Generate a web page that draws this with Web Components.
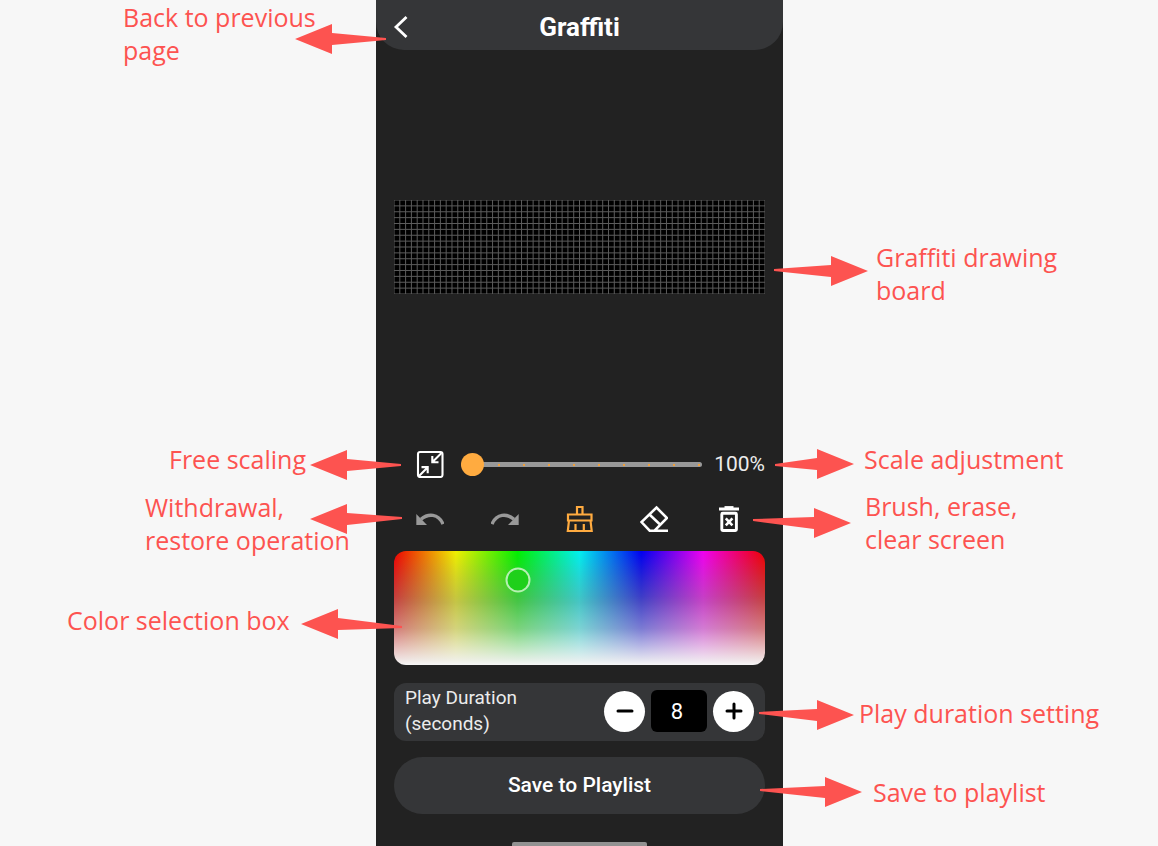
<!DOCTYPE html>
<html lang="en">
<head>
<meta charset="utf-8">
<meta name="viewport" content="width=device-width, initial-scale=1">
<title>Graffiti</title>
<style>
  html, body { margin: 0; min-height: 100%; background: #f7f7f7; }
</style>
</head>
<body>
<guide-page>
  <guide-callout slot="left" style="top:1px; right:-10px; width:263px; --arrow-top:22px"><span>Back to previous<br>page</span></guide-callout>
  <guide-callout slot="left" style="top:443px; right:-25px; width:232px; --arrow-top:6px"><span>Free scaling</span></guide-callout>
  <guide-callout slot="left" tilt="-1" length="92" style="top:491px; right:-26px; width:257px; --arrow-top:12px"><span>Withdrawal,<br>restore operation</span></guide-callout>
  <guide-callout slot="left" tilt="3" length="101" style="top:604px; right:-26px; width:335px; --arrow-top:4px"><span>Color selection box</span></guide-callout>

  <phone-screen slot="phone"></phone-screen>

  <guide-callout slot="right" side="right" tilt="-1" length="94" style="top:241px; left:-9px; --indent:102px; --arrow-top:14px"><span>Graffiti drawing<br>board</span></guide-callout>
  <guide-callout slot="right" side="right" tilt="1" length="79" style="top:443px; left:-8px; --indent:89px; --arrow-top:5px"><span>Scale adjustment</span></guide-callout>
  <guide-callout slot="right" side="right" tilt="-3" length="98" style="top:490px; left:-30px; --indent:112px; --arrow-top:17px"><span>Brush, erase,<br>clear screen</span></guide-callout>
  <guide-callout slot="right" side="right" tilt="-2" length="95" style="top:697px; left:-24px; --indent:100px; --arrow-top:2px"><span>Play duration setting</span></guide-callout>
  <guide-callout slot="right" side="right" tilt="-2" length="102" style="top:776px; left:-23px; --indent:113px; --arrow-top:0px"><span>Save to playlist</span></guide-callout>
</guide-page>

<script>
class BaseElement extends HTMLElement {
  render(html) {
    this.attachShadow({ mode: 'open' }).innerHTML = html;
  }
}

/* Three columns: notes, phone, notes. */
customElements.define('guide-page', class extends BaseElement {
  connectedCallback() {
    this.render(`
      <style>
        :host { display: grid; grid-template-columns: minmax(0, 376fr) minmax(0, 407fr) minmax(0, 375fr); min-height: 100vh; overflow: hidden; background: #f7f7f7; }
        aside { position: relative; z-index: 1; }
      </style>
      <aside><slot name="left"></slot></aside>
      <slot name="phone"></slot>
      <aside><slot name="right"></slot></aside>`);
  }
});

/* A red note whose arrow reaches over the edge of the phone. */
customElements.define('guide-callout', class extends BaseElement {
  connectedCallback() {
    const length = Number(this.getAttribute('length') || 91);
    const tilt = Number(this.getAttribute('tilt') || 0);
    const right = this.getAttribute('side') === 'right';
    const x = v => right ? length - v : v;
    const points = [[0, 16], [37, 1], [37, 10], [length, 15 + tilt], [length, 17 + tilt], [37, 22], [37, 31]]
      .map(([px, py]) => x(px) + ',' + py).join(' ');
    this.render(`
      <style>
        :host { position: absolute; display: grid; align-items: start; color: #fd5350; font: 25px/33px "Open Sans", "Noto Sans", sans-serif; font-variant-ligatures: none; white-space: nowrap; }
        .text, svg { grid-area: 1 / 1; }
        .text { margin-left: var(--indent, 0px); }
        svg { display: block; margin-top: var(--arrow-top, 0px); justify-self: ${right ? 'start' : 'end'}; }
      </style>
      <div class="text"><slot></slot></div>
      <svg width="${length}" height="32" viewBox="0 0 ${length} 32" aria-hidden="true"><polygon points="${points}" fill="#fd5350"/></svg>`);
  }
});

customElements.define('phone-screen', class extends BaseElement {
  connectedCallback() {
    this.render(`
      <style>
        :host { display: flex; flex-direction: column; background: #222; color: #fff; font-family: Roboto, sans-serif; }
        main { display: flex; flex-direction: column; padding: 150px 18px 0; }
        scale-row { margin-top: 156px; }
        tool-row { margin-top: 27px; }
        color-box { margin-top: 18px; }
        duration-card { margin-top: 18px; }
        .save { margin-top: 16px; height: 57px; padding: 0 0 2px; border: 0; border-radius: 29px; background: #353638; color: #fff; font: 500 21px/24px Roboto, sans-serif; }
        .home { width: 135px; height: 4px; margin: 28px auto 0; border-radius: 2px 2px 0 0; background: #929292; }
      </style>
      <app-header></app-header>
      <main>
        <drawing-board></drawing-board>
        <scale-row></scale-row>
        <tool-row></tool-row>
        <color-box></color-box>
        <duration-card></duration-card>
        <button class="save" type="button">Save to Playlist</button>
      </main>
      <div class="home"></div>`);
  }
});

customElements.define('app-header', class extends BaseElement {
  connectedCallback() {
    this.render(`
      <style>
        :host { display: grid; grid-template-columns: 48px 1fr 48px; align-items: center; height: 50px; border-radius: 0 0 28px 28px; background: #353638; }
        button { display: block; padding: 0; border: 0; background: none; }
        svg { display: block; margin: 4px 0 0 12px; }
        h1 { margin: 4px 0 0; text-align: center; font: 700 26px/30px Roboto, sans-serif; }
      </style>
      <button type="button" aria-label="Back"><svg width="24" height="28" viewBox="0 0 24 28" fill="none" stroke="#fff" stroke-width="2.8"><path d="M18.500 4 8 14l10.500 10"/></svg></button>
      <h1>Graffiti</h1>`);
  }
});

/* 64 x 16 LED matrix. */
customElements.define('drawing-board', class extends BaseElement {
  connectedCallback() {
    let d = '';
    for (let c = 0; c <= 64; c++) d += `M${c} 0V16`;
    for (let r = 0; r <= 16; r++) d += `M0 ${r}H64`;
    this.render(`
      <style>
        :host { display: block; height: 94px; background: #000; }
        svg { display: block; width: 100%; height: 100%; }
      </style>
      <svg viewBox="0 0 64 16" preserveAspectRatio="none" role="img" aria-label="Drawing board"><path d="${d}" fill="none" stroke="#5c5c5c" stroke-width="1" vector-effect="non-scaling-stroke"/></svg>`);
  }
});

customElements.define('scale-row', class extends BaseElement {
  connectedCallback() {
    this.render(`
      <style>
        :host { display: flex; align-items: center; height: 28px; padding-left: 22px; }
        button { padding: 0; border: 0; background: none; }
        svg { display: block; }
        input { appearance: none; flex: 1; min-width: 0; height: 22px; margin: 0 12px 0 17px; background: none; }
        input::-webkit-slider-runnable-track {
          height: 5px; border-radius: 3px;
          background: linear-gradient(90deg, #f0a03c 2px, transparent 2px) 12px 2px / 25px 2px repeat-x, #999;
        }
        input::-webkit-slider-thumb { appearance: none; width: 23px; height: 23px; margin-top: -9px; border-radius: 50%; background: #ffab40; }
        output { font-size: 21px; line-height: 24px; color: #ececec; }
      </style>
      <button type="button" aria-label="Free scaling">
        <svg width="28" height="28" viewBox="0 0 28 28" fill="none" stroke="#fff" stroke-width="2.1"><rect x="2" y="2" width="24.500" height="25" rx="2"/><path d="M25.500 3 16.500 12M16.300 6v6.200h6.200M2.500 26.500l9-9M5.500 17.100h6.200v6.200"/></svg>
      </button>
      <input id="scale" type="range" min="100" max="1000" value="100" aria-label="Scale">
      <output for="scale">100%</output>`);
  }
});

customElements.define('tool-row', class extends BaseElement {
  connectedCallback() {
    const tools = [
      ['Undo', '#999', '<path d="M.3 9v11H11z" fill="currentColor" stroke="none"/><path d="M5 14.300C12 8.300 22.500 8.300 27 19.200" stroke-width="3.400"/>'],
      ['Redo', '#999', '<path d="M27.700 9v11H17z" fill="currentColor" stroke="none"/><path d="M23 14.300C16 8.300 5.500 8.300 1 19.200" stroke-width="3.400"/>'],
      ['Brush', '#ffab40', '<path d="M11 9V2h5.500v7M2 9.500h23.500v6H2zM3 15.500 1.800 26h23.900L24.500 15.500M9.500 19v7M17.800 19v7" stroke-width="2.200"/>'],
      ['Erase', '#fff', '<path d="M16.500 2.500 27 13 14.500 25.700H9.700L1.500 17zM9.500 9.500l10.500 10M14 25.700h14" stroke-width="2.500"/>'],
      ['Clear screen', '#fff', '<path d="M4 4h20" stroke-width="3"/><path d="M9.500 2.300h9" stroke-width="2.400"/><rect x="6.800" y="8.300" width="14.600" height="17.200" rx="1" stroke-width="2.900"/><path d="m10.800 13.300 6.600 7M17.400 13.300l-6.600 7" stroke-width="2.600"/>']
    ];
    this.render(`
      <style>
        :host { display: flex; justify-content: space-between; padding: 0 22px; }
        button { padding: 0; border: 0; background: none; }
        svg { display: block; }
      </style>` + tools.map(([name, color, art]) =>
        `<button type="button" aria-label="${name}" style="color:${color}"><svg width="28" height="28" viewBox="0 0 28 28" fill="none" stroke="currentColor">${art}</svg></button>`).join(''));
  }
});

customElements.define('color-box', class extends BaseElement {
  connectedCallback() {
    this.render(`
      <style>
        :host {
          display: block; position: relative; height: 114px; border-radius: 12px;
          background:
            linear-gradient(180deg, rgba(200, 200, 200, 0) 0%, rgba(200, 200, 200, .3) 40%, rgba(205, 205, 205, .6) 68%, rgba(238, 238, 238, .95) 95%, #f6f6f6 100%),
            linear-gradient(180deg, rgba(0, 0, 0, .06), rgba(0, 0, 0, .24) 45%, rgba(0, 0, 0, 0)),
            linear-gradient(90deg, #f00, #ff0, #0f0, #0ff, #00f, #f0f, #f00);
        }
        /* The marker sits at the picked hue and tint. */
        button { position: absolute; left: 33.333%; top: 25%; width: 25px; height: 25px; padding: 0; transform: translate(-50%, -50%); border: 2px solid #b6f0b2; border-radius: 50%; background: #1fd01a; }
      </style>
      <button type="button" aria-label="Selected color"></button>`);
  }
});

customElements.define('duration-card', class extends BaseElement {
  connectedCallback() {
    this.render(`
      <style>
        :host { display: flex; align-items: center; gap: 6px; height: 58px; box-sizing: border-box; padding: 0 11px 2px 11px; border-radius: 12px; background: #353638; }
        label { flex: 1; font-size: 19px; line-height: 26px; color: #ececec; }
        button { display: grid; place-items: center; width: 41px; height: 41px; padding: 0; border: 0; border-radius: 50%; background: #fff; }
        input { width: 56px; height: 42px; box-sizing: border-box; padding: 0 4px 0 0; border: 0; border-radius: 6px; background: #000; color: #fff; text-align: center; font: 22px/26px Roboto, sans-serif; }
      </style>
      <label for="seconds">Play Duration<br>(seconds)</label>
      <button type="button" aria-label="Decrease"><svg width="20" height="20" viewBox="0 0 20 20" stroke="#000" stroke-width="3" stroke-linecap="round"><path d="M3 10h14"/></svg></button>
      <input id="seconds" type="text" inputmode="numeric" value="8">
      <button type="button" aria-label="Increase"><svg width="20" height="20" viewBox="0 0 20 20" stroke="#000" stroke-width="3" stroke-linecap="round"><path d="M3 10h14M10 3v14"/></svg></button>`);
  }
});
</script>
</body>
</html>
